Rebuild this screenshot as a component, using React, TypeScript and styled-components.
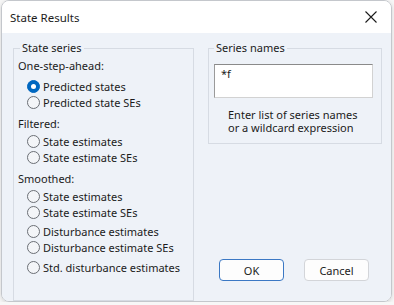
import React, { useState } from 'react';
import styled, { createGlobalStyle } from 'styled-components';

const GlobalStyle = createGlobalStyle`
  html, body {
    margin: 0;
    padding: 0;
    background: #f7f7f7;
  }
  body {
    font-family: "Noto Sans", "Liberation Sans", sans-serif;
    font-size: 11px;
    color: #1b1b1b;
  }
`;

const Window = styled.div`
  box-sizing: border-box;
  width: 391px;
  height: 302px;
  margin-left: 1px;
  border: 1px solid #c4c7cc;
  border-radius: 8px;
  overflow: hidden;
  display: flex;
  flex-direction: column;
  box-shadow: 0 1px 4px rgba(0, 0, 0, 0.15);
`;

const TitleBar = styled.div`
  height: 32px;
  flex: none;
  background: #ffffff;
  display: flex;
  align-items: center;
  justify-content: space-between;
  padding: 0 8px 0 8px;
  font-size: 11.5px;
`;

const CloseButton = styled.button`
  border: none;
  background: transparent;
  padding: 0;
  width: 20px;
  height: 20px;
  display: flex;
  align-items: center;
  justify-content: center;
  margin-right: 2px;
`;

const Body = styled.div`
  flex: 1;
  background: #eef2f8;
  display: flex;
  gap: 14px;
  padding: 7px 0 0 11px;
`;

const Group = styled.fieldset<{ $width: number; $padLeft: number }>`
  box-sizing: border-box;
  width: ${({ $width }) => $width}px;
  margin: 0;
  min-width: 0;
  border: 1px solid #d6dbe3;
  padding: 0 0 0 ${({ $padLeft }) => $padLeft}px;
`;

const Legend = styled.legend<{ $shift: number }>`
  padding: 0 2px;
  margin-left: ${({ $shift }) => $shift}px;
  line-height: 16px;
`;

const SectionLabel = styled.div<{ $mt: number }>`
  height: 16px;
  line-height: 16px;
  margin-top: ${({ $mt }) => $mt}px;
`;

const RadioRow = styled.label<{ $mt: number }>`
  display: flex;
  align-items: center;
  gap: 3px;
  height: 16px;
  margin-top: ${({ $mt }) => $mt}px;
  margin-left: 9px;
  cursor: default;
`;

const RadioDot = styled.span<{ $checked: boolean }>`
  box-sizing: border-box;
  width: 13px;
  height: 13px;
  border-radius: 50%;
  flex: none;
  position: relative;
  border: 1px solid ${({ $checked }) => ($checked ? '#0067c0' : '#6b6f75')};
  background: ${({ $checked }) => ($checked ? '#0067c0' : '#f3f5f8')};

  &::after {
    content: '';
    display: ${({ $checked }) => ($checked ? 'block' : 'none')};
    position: absolute;
    left: 3px;
    top: 3px;
    width: 5px;
    height: 5px;
    border-radius: 50%;
    background: #ffffff;
  }
`;

const RightColumn = styled.div`
  display: flex;
  flex-direction: column;
  justify-content: space-between;
  height: 244px;
`;

const NamesInput = styled.div`
  box-sizing: border-box;
  width: 159px;
  height: 34px;
  margin-top: 8px;
  background: #ffffff;
  border: 1px solid #d2d2d2;
  border-top-color: #8a8a8a;
  border-left-color: #9a9a9a;
  padding: 1px 0 0 6px;
  line-height: 16px;
`;

const HelpText = styled.div`
  margin: 10px 0 9px 14px;
  line-height: 13px;
`;

const ButtonRow = styled.div`
  display: flex;
  gap: 20px;
  padding-left: 11px;
  margin-bottom: 3px;
`;

const DialogButton = styled.button<{ $primary?: boolean }>`
  box-sizing: border-box;
  width: 65px;
  height: 22px;
  padding: 0;
  font-family: inherit;
  font-size: 11px;
  color: #1b1b1b;
  background: #fdfdfd;
  border-radius: 4px;
  border: 1px solid ${({ $primary }) => ($primary ? '#3b78c4' : '#d3d5d9')};
`;

const smoothed = [
  { label: 'State estimates', mt: 1 },
  { label: 'State estimate SEs', mt: 0 },
  { label: 'Disturbance estimates', mt: 3 },
  { label: 'Disturbance estimate SEs', mt: 0 },
  { label: 'Std. disturbance estimates', mt: 4 },
];

function Radio({ id, label, mt, value, onPick }: { id: string; label: string; mt: number; value: string; onPick: (v: string) => void }) {
  return (
    <RadioRow $mt={mt} onClick={() => onPick(id)}>
      <RadioDot $checked={value === id} />
      {label}
    </RadioRow>
  );
}

export default function App() {
  const [choice, setChoice] = useState('pred');

  return (
    <>
      <GlobalStyle />
      <Window>
        <TitleBar>
          <span>State Results</span>
          <CloseButton aria-label="Close">
            <svg width="12" height="12" viewBox="0 0 12 12">
              <path d="M0.5 0.5 L11.5 11.5 M11.5 0.5 L0.5 11.5" stroke="#1b1b1b" strokeWidth="1.1" fill="none" />
            </svg>
          </CloseButton>
        </TitleBar>
        <Body>
          <Group $width={181} $padLeft={4}>
            <Legend $shift={2}>State series</Legend>
            <SectionLabel $mt={2}>One-step-ahead:</SectionLabel>
            <Radio id="pred" label="Predicted states" mt={4} value={choice} onPick={setChoice} />
            <Radio id="predse" label="Predicted state SEs" mt={0} value={choice} onPick={setChoice} />
            <SectionLabel $mt={6}>Filtered:</SectionLabel>
            <Radio id="filt" label="State estimates" mt={1} value={choice} onPick={setChoice} />
            <Radio id="filtse" label="State estimate SEs" mt={0} value={choice} onPick={setChoice} />
            <SectionLabel $mt={6}>Smoothed:</SectionLabel>
            {smoothed.map((s, i) => (
              <Radio key={s.label} id={'sm' + i} label={s.label} mt={s.mt} value={choice} onPick={setChoice} />
            ))}
          </Group>
          <RightColumn>
            <Group $width={174} $padLeft={5}>
              <Legend $shift={0}>Series names</Legend>
              <NamesInput>*f</NamesInput>
              <HelpText>
                Enter list of series names
                <br />
                or a wildcard expression
              </HelpText>
            </Group>
            <ButtonRow>
              <DialogButton $primary>OK</DialogButton>
              <DialogButton>Cancel</DialogButton>
            </ButtonRow>
          </RightColumn>
        </Body>
      </Window>
    </>
  );
}
